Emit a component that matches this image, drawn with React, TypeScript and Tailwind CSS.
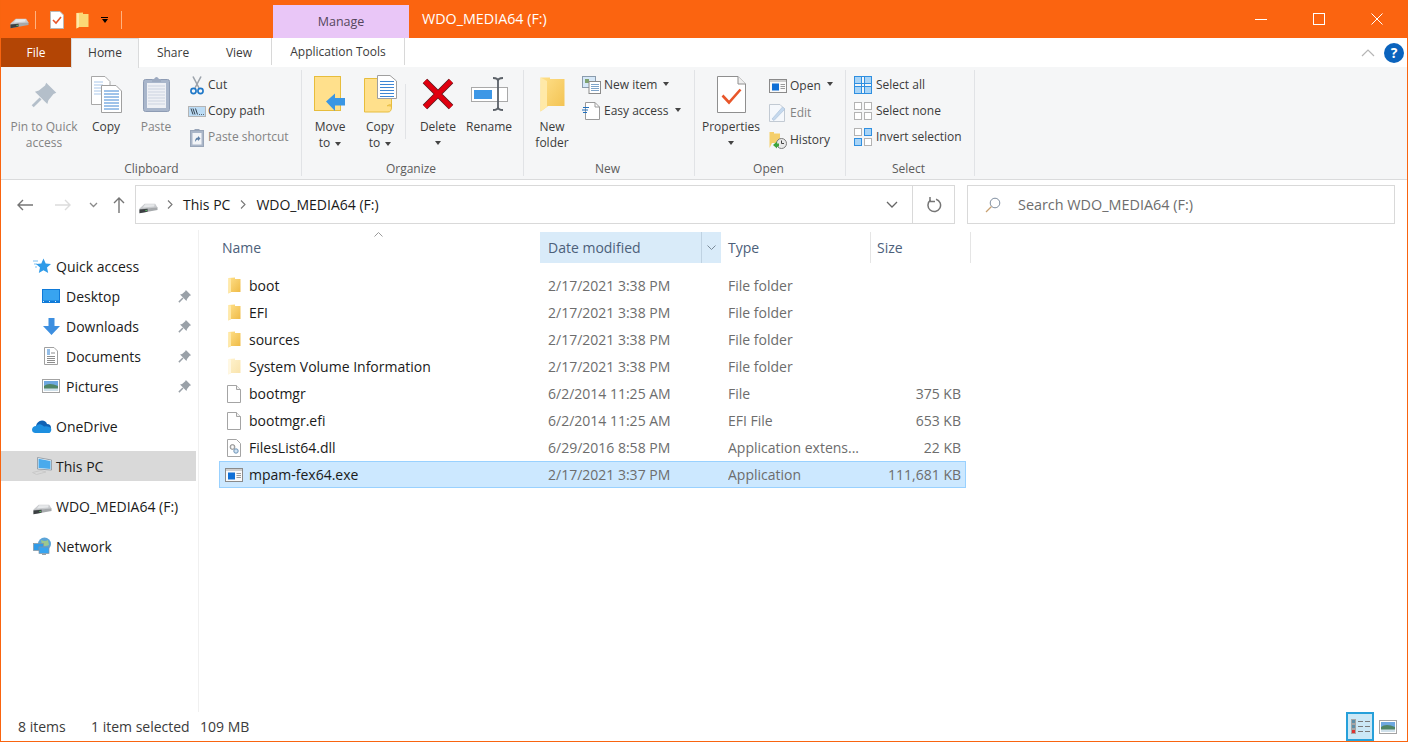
import type { ReactNode } from 'react';

function Drive({ className = '' }: { className?: string }) {
  return (
    <svg viewBox="0 0 20 11" className={`h-[11px] w-[19px] ${className}`}>
      <path d="M0.5 5.5 L6 0.5 H17 L19.5 4.5 V5 L0.5 6.5 Z" fill="#c9cbce" />
      <path d="M6.5 1 H16.5 L16 3.5 L4 4.5 Z" fill="#e6e8ea" />
      <path d="M0.5 6 L19.5 4.5 V7 L0.5 10.5 Z" fill="#a6a9ac" />
      <path d="M0.5 6.5 L9 5.8 V8.8 L0.5 10.5 Z" fill="#3c4043" />
      <circle cx="7.5" cy="7.5" r="0.8" fill="#5fd06a" />
    </svg>
  );
}

function ListFolder({ pale = false }: { pale?: boolean }) {
  const id = pale ? 'fp' : 'fy';
  return (
    <svg viewBox="0 0 13 17" className="h-[17px] w-[13px]">
      <defs>
        <linearGradient id={id} x1="0" y1="0" x2="1" y2="1">
          <stop offset="0" stopColor={pale ? '#fff3cf' : '#ffe08a'} />
          <stop offset="1" stopColor={pale ? '#f9e3ab' : '#eeb943'} />
        </linearGradient>
      </defs>
      <path d="M0.5 1 L7 0.5 V2 H12.5 V15 H3 L0.5 16.5 Z" fill={`url(#${id})`} />
      <path d="M0.5 1 L3 1.5 V15 L0.5 16.5 Z" fill={pale ? '#fff8e3' : '#ffe9a8'} />
    </svg>
  );
}

function BlankFile() {
  return (
    <svg viewBox="0 0 14 18" className="h-[18px] w-[14px]">
      <path d="M0.5 0.5 H9.5 L13.5 4.5 V17.5 H0.5 Z" fill="#fff" stroke="#a4a4a4" />
      <path d="M9.5 0.5 V4.5 H13.5" fill="#f2f2f2" stroke="#a4a4a4" />
    </svg>
  );
}

function DllFile() {
  return (
    <svg viewBox="0 0 14 18" className="h-[18px] w-[14px]">
      <path d="M0.5 0.5 H9.5 L13.5 4.5 V17.5 H0.5 Z" fill="#fff" stroke="#a4a4a4" />
      <circle cx="5.5" cy="8" r="2.4" fill="#e4e4e4" stroke="#8b8b8b" />
      <circle cx="5.5" cy="8" r="0.9" fill="#fff" />
      <circle cx="9" cy="12" r="2.2" fill="#cfe2f3" stroke="#6e93b5" />
    </svg>
  );
}

function WindowIcon({ className = 'h-[14px] w-[18px]' }: { className?: string }) {
  return (
    <svg viewBox="0 0 18 14" className={className}>
      <rect x="0.5" y="0.5" width="17" height="13" fill="#fafafa" stroke="#8a8a8a" />
      <rect x="1" y="1" width="16" height="2" fill="#cfcfcf" />
      <rect x="3" y="4.5" width="7" height="7" fill="#0f6fd6" />
      <path d="M11.5 5.5 H16 M11.5 7.5 H16 M11.5 9.5 H16" stroke="#9a9a9a" />
    </svg>
  );
}

function Pin({ className = '', color = '#a3abb3' }: { className?: string; color?: string }) {
  return (
    <svg viewBox="0 0 24 24" className={className}>
      <path d="M13.5 1.5 L22.5 10.5 L20 11.5 L15.5 17 L14.5 20.5 L3.5 9.5 L7 8.5 L12.5 4 Z" fill={color} />
      <path d="M8.5 15.5 L1.5 22.5" stroke={color} strokeWidth="2.5" />
    </svg>
  );
}

function CopyDocs({ className = 'h-[37px] w-[31px]' }: { className?: string }) {
  const lines = [5, 8, 11, 14, 17, 20, 23];
  return (
    <svg viewBox="0 0 31 37" className={className}>
      <path d="M0.5 0.5 H14 L19 5.5 V28.5 H0.5 Z" fill="#fff" stroke="#a8a8a8" />
      {lines.slice(0, 5).map((y) => (
        <path key={y} d={`M3 ${y + 1} H12`} stroke="#a9c7ea" />
      ))}
      <path d="M10.5 9.5 H25 L30.5 15 V36.5 H10.5 Z" fill="#fff" stroke="#a0a0a0" />
      {lines.map((y) => (
        <path key={y} d={`M13 ${y + 10} H28`} stroke="#3e86d4" />
      ))}
    </svg>
  );
}

function PasteBoard() {
  return (
    <svg viewBox="0 0 27 36" className="h-[36px] w-[27px]">
      <rect x="0.5" y="3.5" width="26" height="32" rx="2" fill="#a9b6cb" stroke="#8e9cb4" />
      <rect x="4" y="7" width="19" height="25" fill="#eef0f5" />
      {[10, 13, 16, 19, 22, 25, 28].map((y) => (
        <path key={y} d={`M5 ${y} H22`} stroke="#ccd3e0" />
      ))}
      <path d="M9 6 V3 H11 Q13.5 -1 16 3 H18 V6 Z" fill="#9daac0" />
    </svg>
  );
}

function Scissors() {
  return (
    <svg viewBox="0 0 14 19" className="h-[19px] w-[14px]">
      <path d="M3 0.5 L9 12 M11 0.5 L5 12" stroke="#9ca3ab" strokeWidth="1.6" />
      <circle cx="3.5" cy="15" r="2.6" fill="none" stroke="#1f78c8" strokeWidth="1.6" />
      <circle cx="10.5" cy="15" r="2.6" fill="none" stroke="#1f78c8" strokeWidth="1.6" />
    </svg>
  );
}

function CopyPathIcon() {
  return (
    <svg viewBox="0 0 18 11" className="h-[11px] w-[18px]">
      <rect x="0.5" y="0.5" width="17" height="10" fill="#bcdcf5" stroke="#b4b4b4" />
      <path d="M3 2.5 L5 8.5 M5 2.5 L7 8.5 M7.5 2.5 L9.5 8.5" stroke="#26323d" strokeWidth="0.9" />
      <path d="M11 8.5 H12 M13 8.5 H14 M15 8.5 H16" stroke="#5a6772" />
    </svg>
  );
}

function PasteShortcutIcon() {
  return (
    <svg viewBox="0 0 14 19" className="h-[19px] w-[14px]">
      <rect x="0.5" y="2.5" width="13" height="16" fill="#aab6c8" stroke="#98a5b8" />
      <rect x="2.5" y="5" width="9" height="11.5" fill="#f2f4f7" />
      <path d="M4.5 2.5 V1 H9.5 V2.5 Z" fill="#98a5b8" />
      <path d="M5 14 Q5 9.5 8 9.5 V8 L10.5 10.5 L8 13 V11.5 Q6 11.5 5 14 Z" fill="#5d7fa5" />
    </svg>
  );
}

function MoveToIcon() {
  return (
    <svg viewBox="0 0 32 36" className="h-[36px] w-[32px]">
      <rect x="0.5" y="0.5" width="26" height="34" fill="#ffe08c" stroke="#e7bd3c" />
      <path d="M12 25.5 L21 17.5 V22 H31 V29.5 H21 V35 Z" fill="#3a96e4" />
    </svg>
  );
}

function CopyToIcon() {
  return (
    <svg viewBox="0 0 33 38" className="h-[38px] w-[33px]">
      <path d="M0.5 3.5 H27.5 V32 Q27.5 37 24 37 H0.5 Z" fill="#ffe08c" stroke="#e7bd3c" />
      <path d="M23 31 Q27.5 28 27.5 32" fill="#f4cb63" stroke="#e7bd3c" />
      <path d="M13.5 0.5 H26 L32.5 6 V23.5 H13.5 Z" fill="#fff" stroke="#9f9f9f" />
      {[6, 9, 12, 15, 18, 21].map((y) => (
        <path key={y} d={`M16 ${y + 0.5} H30`} stroke="#3e86d4" />
      ))}
    </svg>
  );
}

function DeleteIcon() {
  return (
    <svg viewBox="0 0 32 32" className="h-[32px] w-[32px]">
      <path d="M3 3 L29 29 M29 3 L3 29" stroke="#5d1a20" strokeWidth="6.4" />
      <path d="M3 3 L29 29 M29 3 L3 29" stroke="#e0000f" strokeWidth="4.8" />
    </svg>
  );
}

function RenameIcon() {
  return (
    <svg viewBox="0 0 37 34" className="h-[34px] w-[37px]">
      <rect x="0.5" y="10.5" width="36" height="14" fill="#fff" stroke="#a9a9a9" />
      <rect x="3" y="13" width="18" height="9" fill="#3d97e6" />
      <path d="M22 1 Q27 1 27 4 V30 Q27 33 32 33 M32 1 Q27 1 27 4 M27 30 Q27 33 22 33" fill="none" stroke="#5b6168" strokeWidth="1.8" />
    </svg>
  );
}

function BigFolder() {
  return (
    <svg viewBox="0 0 25 36" className="h-[36px] w-[25px]">
      <defs>
        <linearGradient id="bf" x1="0" y1="0" x2="1" y2="1">
          <stop offset="0" stopColor="#ffe08a" />
          <stop offset="1" stopColor="#f2c14f" />
        </linearGradient>
      </defs>
      <path d="M0.5 1.5 L10 1.5 V3 H24.5 V30 H8 L0.5 35.5 Z" fill="url(#bf)" />
      <path d="M0.5 1.5 L7 5 V31 L0.5 35.5 Z" fill="#ffe9a8" />
    </svg>
  );
}

function NewItemIcon() {
  return (
    <svg viewBox="0 0 19 18" className="h-[18px] w-[19px]">
      <rect x="0.5" y="0.5" width="13" height="11" fill="#d6e8f8" stroke="#8b9cad" />
      <rect x="3" y="3" width="4" height="4" fill="#7fa36f" />
      <rect x="7" y="5.5" width="11.5" height="12" fill="#fff" stroke="#8b8b8b" />
      {[8, 10, 12, 14].map((y) => (
        <path key={y} d={`M9 ${y + 0.5} H17`} stroke="#7ea4c9" />
      ))}
    </svg>
  );
}

function EasyAccessIcon() {
  return (
    <svg viewBox="0 0 18 18" className="h-[18px] w-[18px]">
      <path d="M3.5 0.5 H13 L17.5 5 V17.5 H3.5 Z" fill="#fff" stroke="#9a9a9a" />
      <path d="M13 0.5 V5 H17.5" fill="none" stroke="#9a9a9a" />
      <path d="M1 5.5 H7 M0 8 H6 M1 10.5 H5" stroke="#1f6fbd" />
    </svg>
  );
}

function PropertiesIcon() {
  return (
    <svg viewBox="0 0 29 37" className="h-[37px] w-[29px]">
      <path d="M0.5 0.5 H21 L28.5 8 V36.5 H0.5 Z" fill="#fff" stroke="#8f8f8f" />
      <path d="M21 0.5 V8 H28.5" fill="#efefef" stroke="#8f8f8f" />
      <path d="M5.5 19.5 L12 26.5 L23.5 13.5" fill="none" stroke="#e8562a" strokeWidth="2.6" />
    </svg>
  );
}

function EditIcon() {
  return (
    <svg viewBox="0 0 17 18" className="h-[18px] w-[17px]">
      <path d="M0.5 0.5 H11 L15.5 5 V17.5 H0.5 Z" fill="#f5f8fc" stroke="#c2cad3" />
      <path d="M3 15 L13.5 3 L16 5 L5 16.5 Z" fill="#c5d9ee" stroke="#a7bdd6" strokeWidth="0.6" />
    </svg>
  );
}

function HistoryIcon() {
  return (
    <svg viewBox="0 0 18 18" className="h-[18px] w-[18px]">
      <path d="M0.5 1 H5 V2.5 H11 V12 H3 L0.5 17 Z" fill="#f5cf6b" />
      <circle cx="12.5" cy="12.5" r="5" fill="#e9e9e9" stroke="#7b7b7b" />
      <path d="M12.5 9.5 V12.5 H15" fill="none" stroke="#444" />
      <path d="M4 14 L8 10.5 V12.5 H10 V15.5 H8 V17.5 Z" fill="#3ca33c" />
    </svg>
  );
}

function GridIcon({ on }: { on: boolean[] }) {
  const spots = [
    [0, 0],
    [10, 0],
    [0, 10],
    [10, 10],
  ];
  return (
    <svg viewBox="0 0 18 18" className="h-[18px] w-[18px]">
      {spots.map(([x, y], i) => (
        <rect
          key={i}
          x={x + 0.5}
          y={y + 0.5}
          width="7"
          height="7"
          fill={on[i] ? '#a8d4f7' : '#fff'}
          stroke={on[i] ? '#2f8fe0' : '#b3b3b3'}
        />
      ))}
      {on.every(Boolean) && <path d="M8 0.5 H10 M8 7.5 H10 M8 10.5 H10 M8 17.5 H10 M0.5 8 V10 M7.5 8 V10 M10.5 8 V10 M17.5 8 V10" stroke="#2f8fe0" />}
    </svg>
  );
}

function Caret({ className = 'border-t-[#444]' }: { className?: string }) {
  return <span className={`inline-block h-0 w-0 border-x-[3.5px] border-t-[4px] border-x-transparent align-middle ${className}`} />;
}

function StarIcon() {
  return (
    <svg viewBox="0 0 18 16" className="h-[16px] w-[18px]">
      <path d="M0 3 H5 M1 6 H4 M2 9 H4" stroke="#7cc0f2" />
      <path d="M10.5 0.5 L12.7 5.5 L18 6 L14 9.5 L15.2 15 L10.5 12.2 L5.8 15 L7 9.5 L3 6 L8.3 5.5 Z" fill="#2f9be8" />
    </svg>
  );
}

function DesktopIcon() {
  return (
    <svg viewBox="0 0 18 14" className="h-[14px] w-[18px]">
      <rect x="0" y="0" width="18" height="14" fill="#0f7ad8" />
      <rect x="1" y="1" width="16" height="10.5" fill="#38a4f0" />
      <path d="M1 12.5 H17" stroke="#d8eefc" strokeDasharray="1 5" />
    </svg>
  );
}

function DownloadsIcon() {
  return (
    <svg viewBox="0 0 17 17" className="h-[17px] w-[17px]">
      <path d="M5.5 0 H11.5 V8 H17 L8.5 17 L0 8 H5.5 Z" fill="#3d8fe0" />
    </svg>
  );
}

function DocumentsIcon() {
  return (
    <svg viewBox="0 0 14 18" className="h-[18px] w-[14px]">
      <path d="M0.5 0.5 H10 L13.5 4 V17.5 H0.5 Z" fill="#fff" stroke="#a0a0a0" />
      <path d="M3 3 H6 M3 5 H6 M3 7 H6" stroke="#2d7fd0" />
      <path d="M7 6 H11 M3 9.5 H11 M3 11.5 H11 M3 13.5 H11 M3 15.5 H11" stroke="#8d8d8d" />
    </svg>
  );
}

function PicturesIcon({ className = 'h-[14px] w-[18px]' }: { className?: string }) {
  return (
    <svg viewBox="0 0 18 14" className={className}>
      <rect x="0.5" y="0.5" width="17" height="13" fill="#fff" stroke="#a3a3a3" />
      <rect x="2" y="2" width="14" height="5" fill="#6ea8e0" />
      <path d="M2 7 Q7 3 16 7 V12 H2 Z" fill="#4f8566" />
      <rect x="2" y="9.5" width="14" height="2.5" fill="#cfe0ea" />
    </svg>
  );
}

function OneDriveIcon() {
  return (
    <svg viewBox="0 0 20 13" className="h-[13px] w-[20px]">
      <path d="M4 6 Q5 1 10 0.5 Q14 0.5 15 4 Q19 4 19 8 L10 9 Z" fill="#0f62b5" />
      <path d="M3 13 Q0 12.5 0 9.5 Q0.5 6 4 6 Q6 3.5 9 4.5 Q11 5.5 12 6.5 Q16 5.5 19 8 Q20 11 17.5 13 Z" fill="#1d8fe0" />
    </svg>
  );
}

function ThisPcIcon() {
  return (
    <svg viewBox="0 0 20 18" className="h-[18px] w-[20px]">
      <path d="M5.5 0.5 L19.5 3 V13 L5.5 12 Z" fill="#f2f6f9" stroke="#85919b" strokeWidth="0.8" />
      <path d="M6.5 1.8 L18.5 4 V12 L6.5 11 Z" fill="#49aaec" />
      <path d="M0.5 15.5 L9 13.5 L14 15 L4.5 17.5 Z" fill="none" stroke="#c9c9c9" />
    </svg>
  );
}

function NetworkIcon() {
  return (
    <svg viewBox="0 0 19 18" className="h-[18px] w-[19px]">
      <circle cx="11.5" cy="7" r="6.5" fill="#5ba4d8" />
      <path d="M8 3 Q12 5 15 3 L16 8 Q12 10 9 8 Z" fill="#9cc78e" />
      <rect x="0.5" y="6.5" width="10" height="7" fill="#2f9be8" stroke="#8a949c" strokeWidth="0.7" />
      <rect x="6" y="10" width="10" height="6.5" fill="#38a4f0" stroke="#8a949c" strokeWidth="0.7" />
      <path d="M9 17.5 H13" stroke="#9aa0a5" />
    </svg>
  );
}

function LargeButton({ w, icon, label, gray = false, caret = false }: { w: string; icon: ReactNode; label: ReactNode; gray?: boolean; caret?: boolean }) {
  return (
    <div className={`flex shrink-0 flex-col items-center ${w}`}>
      <div className="flex h-[47px] items-center justify-center pb-[3px]">{icon}</div>
      <div className={`text-center leading-[16px] whitespace-nowrap ${gray ? 'text-[#838383]' : 'text-[#3b3b3b]'}`}>
        {label}
        {caret && (
          <div className="flex h-[16px] items-center justify-center">
            <Caret />
          </div>
        )}
      </div>
    </div>
  );
}

function SmallButton({ icon, label, w, gray = false, caret = false, h = 'h-[26px]' }: { icon: ReactNode; label: string; w: string; gray?: boolean; caret?: boolean; h?: string }) {
  return (
    <div className={`flex items-center ${h} ${gray ? 'text-[#838383]' : 'text-[#3b3b3b]'}`}>
      <div className={`flex shrink-0 items-center justify-center ${w}`}>{icon}</div>
      <span>{label}</span>
      {caret && <Caret className="ml-[6px] mb-[3px] border-t-[#444]" />}
    </div>
  );
}

function Group({ w, title, titlePad = 'pr-[4px]', children }: { w: string; title: string; titlePad?: string; children: ReactNode }) {
  return (
    <div className={`relative flex h-full shrink-0 flex-col ${w}`}>
      <div className="flex h-[94px] pt-[5px]">{children}</div>
      <div className={`text-center leading-[16px] text-[#5c5c5c] ${titlePad}`}>{title}</div>
      <div className="absolute right-0 top-[3px] bottom-[3px] w-px bg-[#e1e3e6]" />
    </div>
  );
}

function Ribbon() {
  return (
    <div className="flex h-[113px] shrink-0 border-b border-[#dadbdc] bg-[#f5f6f7] text-[12px]">
      <Group w="w-[301px]" titlePad="pr-0" title="Clipboard">
        <div className="w-[7px] shrink-0" />
        <LargeButton w="w-[72px]" gray icon={<Pin className="h-[27px] w-[27px]" color="#b4bfca" />} label={<>Pin to Quick<br />access</>} />
        <LargeButton w="w-[52px]" icon={<CopyDocs />} label="Copy" />
        <LargeButton w="w-[48px]" gray icon={<PasteBoard />} label="Paste" />
        <div className="ml-[5px]">
          <SmallButton w="w-[23px]" icon={<Scissors />} label="Cut" />
          <SmallButton w="w-[23px]" icon={<CopyPathIcon />} label="Copy path" />
          <SmallButton w="w-[23px]" gray icon={<PasteShortcutIcon />} label="Paste shortcut" />
        </div>
      </Group>
      <Group w="w-[222px]" title="Organize">
        <div className="w-[3px] shrink-0" />
        <LargeButton w="w-[50px]" icon={<MoveToIcon />} label={<>Move<br />to <Caret className="ml-[2px] border-t-[#444]" /></>} />
        <LargeButton w="w-[50px]" icon={<CopyToIcon />} label={<>Copy<br />to <Caret className="ml-[2px] border-t-[#444]" /></>} />
        <div className="mt-[12px] h-[55px] w-px bg-[#e1e3e6]" />
        <LargeButton w="w-[64px]" icon={<DeleteIcon />} label="Delete" caret />
        <LargeButton w="w-[38px]" icon={<RenameIcon />} label="Rename" />
      </Group>
      <Group w="w-[171px]" title="New">
        <div className="w-[6px] shrink-0" />
        <LargeButton w="w-[44px]" icon={<BigFolder />} label={<>New<br />folder</>} />
        <div className="ml-[7px]">
          <SmallButton w="w-[20px] mr-[3px]" icon={<NewItemIcon />} label="New item" caret />
          <SmallButton w="w-[20px] mr-[3px]" icon={<EasyAccessIcon />} label="Easy access" caret />
        </div>
      </Group>
      <Group w="w-[151px]" title="Open">
        <div className="w-[2px] shrink-0" />
        <LargeButton w="w-[68px]" icon={<PropertiesIcon />} label="Properties" caret />
        <div className="ml-[3px]">
          <SmallButton h="h-[27px]" w="w-[19px] mr-[3px]" icon={<WindowIcon />} label="Open" caret />
          <SmallButton h="h-[27px]" w="w-[19px] mr-[3px]" gray icon={<EditIcon />} label="Edit" />
          <SmallButton h="h-[27px]" w="w-[19px] mr-[3px]" icon={<HistoryIcon />} label="History" />
        </div>
      </Group>
      <Group w="w-[129px]" title="Select">
        <div className="w-[8px] shrink-0" />
        <div>
          <SmallButton w="w-[18px] mr-[4px]" icon={<GridIcon on={[true, true, true, true]} />} label="Select all" />
          <SmallButton w="w-[18px] mr-[4px]" icon={<GridIcon on={[false, false, false, false]} />} label="Select none" />
          <SmallButton w="w-[18px] mr-[4px]" icon={<GridIcon on={[false, true, true, false]} />} label="Invert selection" />
        </div>
      </Group>
    </div>
  );
}

function NavRow({ icon, label, pinned = false, selected = false, deep = false, gap = false }: { icon: ReactNode; label: string; pinned?: boolean; selected?: boolean; deep?: boolean; gap?: boolean }) {
  return (
    <div className={`flex h-[30px] w-[195px] items-center ${gap ? 'mt-[10px]' : ''} ${selected ? 'bg-[#d9d9d9]' : ''}`}>
      <div className={`flex w-[24px] shrink-0 items-center justify-center ${deep ? 'ml-[38px] mr-[3px]' : 'ml-[29px]'}`}>{icon}</div>
      <span className={deep ? '' : 'ml-[2px]'}>{label}</span>
      {pinned && <Pin className="ml-auto mr-[4px] h-[14px] w-[14px]" color="#9aa1a8" />}
    </div>
  );
}

const files = [
  { name: 'boot', date: '2/17/2021 3:38 PM', type: 'File folder', size: '', icon: <ListFolder /> },
  { name: 'EFI', date: '2/17/2021 3:38 PM', type: 'File folder', size: '', icon: <ListFolder /> },
  { name: 'sources', date: '2/17/2021 3:38 PM', type: 'File folder', size: '', icon: <ListFolder /> },
  { name: 'System Volume Information', date: '2/17/2021 3:38 PM', type: 'File folder', size: '', icon: <ListFolder pale /> },
  { name: 'bootmgr', date: '6/2/2014 11:25 AM', type: 'File', size: '375 KB', icon: <BlankFile /> },
  { name: 'bootmgr.efi', date: '6/2/2014 11:25 AM', type: 'EFI File', size: '653 KB', icon: <BlankFile /> },
  { name: 'FilesList64.dll', date: '6/29/2016 8:58 PM', type: 'Application extens...', size: '22 KB', icon: <DllFile /> },
  { name: 'mpam-fex64.exe', date: '2/17/2021 3:37 PM', type: 'Application', size: '111,681 KB', icon: <WindowIcon />, selected: true },
];

export default function App() {
  return (
    <div className="box-border flex h-[742px] w-[1408px] flex-col overflow-hidden border-x border-b border-[#f9640f] bg-white font-['Open_Sans','Noto_Sans',sans-serif] text-[14px] text-[#1a1a1a]">
      {/* Title bar */}
      <div className="-mx-px flex h-[38px] shrink-0 bg-[#fb6410]">
        <div className="flex h-full w-[273px] items-center pl-[10px] pt-[2px]">
          <Drive className="mt-[6px]" />
          <div className="ml-[6px] h-[18px] w-px bg-[#ffb27f]" />
          <svg viewBox="0 0 14 18" className="ml-[14px] h-[18px] w-[14px]">
            <path d="M0.5 0.5 H10 L13.5 4 V17.5 H0.5 Z" fill="#fff" stroke="#b8b8b8" />
            <path d="M3 9 L6 12 L11 6" fill="none" stroke="#e8562a" strokeWidth="1.6" />
          </svg>
          <svg viewBox="0 0 13 17" className="ml-[12px] h-[17px] w-[13px]">
            <path d="M0.5 1 L7 0.5 V2 H12.5 V15 H3 L0.5 16.5 Z" fill="#fbd976" />
            <path d="M0.5 1 L3 1.5 V15 L0.5 16.5 Z" fill="#ffe9a8" />
          </svg>
          <div className="ml-[11px] flex w-[9px] flex-col items-center">
            <div className="mb-[1px] h-px w-[7px] bg-black" />
            <Caret className="border-t-black" />
          </div>
          <div className="ml-[12px] h-[18px] w-px bg-[#ffb27f]" />
        </div>
        <div className="mt-[5px] flex h-[33px] w-[136px] items-center justify-center bg-[#e9c6f7] pt-[2px] text-[12.5px] text-[#55465c]">Manage</div>
        <div className="ml-[13px] flex items-center pb-[1px] text-[14.3px] text-white">WDO_MEDIA64 (F:)</div>
        <div className="ml-auto mr-[2px] flex">
          <div className="flex h-[38px] w-[58px] items-center justify-center">
            <div className="h-px w-[12px] bg-white" />
          </div>
          <div className="flex h-[38px] w-[58px] items-center justify-center">
            <div className="h-[12px] w-[12px] border border-white" />
          </div>
          <div className="flex h-[38px] w-[58px] items-center justify-center">
            <svg viewBox="0 0 12 12" className="h-[12px] w-[12px]">
              <path d="M0.5 0.5 L11.5 11.5 M11.5 0.5 L0.5 11.5" stroke="#fff" />
            </svg>
          </div>
        </div>
      </div>

      {/* Tabs */}
      <div className="flex h-[29px] shrink-0 items-stretch bg-white text-[12px] text-[#3b3b3b]">
        <div className="flex w-[70px] items-center justify-center bg-[#b34505] text-white">File</div>
        <div className="z-10 -mb-px flex w-[68px] items-center justify-center border-x border-t border-[#dadbdc] bg-[#f5f6f7] pb-[1px]">Home</div>
        <div className="flex w-[68px] items-center justify-center">Share</div>
        <div className="flex w-[64px] items-center justify-center">View</div>
        <div className="flex h-[27px] w-[134px] items-center justify-center border-x border-[#d8d8d8]">Application Tools</div>
        <div className="ml-auto mr-[3px] flex items-center gap-[9px]">
          <svg viewBox="0 0 14 8" className="h-[8px] w-[14px]">
            <path d="M1 7 L7 1 L13 7" fill="none" stroke="#b5b5b5" strokeWidth="1.2" />
          </svg>
          <div className="flex h-[20px] w-[20px] items-center justify-center rounded-full bg-[#0b63bd] text-[14px] font-bold leading-none text-white">?</div>
        </div>
      </div>

      <Ribbon />

      {/* Address bar */}
      <div className="flex h-[50px] shrink-0 items-start pt-[5px]">
        <div className="flex h-[39px] w-[134px] shrink-0 items-center text-[#7d7d7d]">
          <svg viewBox="0 0 16 12" className="ml-[16px] h-[12px] w-[16px]">
            <path d="M6 1 L1 6 L6 11 M1 6 H16" fill="none" stroke="#757575" strokeWidth="1.4" />
          </svg>
          <svg viewBox="0 0 16 12" className="ml-[22px] h-[12px] w-[16px]">
            <path d="M10 1 L15 6 L10 11 M15 6 H0" fill="none" stroke="#dcdcdc" strokeWidth="1.4" />
          </svg>
          <svg viewBox="0 0 9 6" className="ml-[18px] h-[6px] w-[9px]">
            <path d="M1 1 L4.5 4.5 L8 1" fill="none" stroke="#8a8a8a" strokeWidth="1.3" />
          </svg>
          <svg viewBox="0 0 12 16" className="ml-[15px] h-[16px] w-[12px]">
            <path d="M1 6 L6 1 L11 6 M6 1 V16" fill="none" stroke="#757575" strokeWidth="1.4" />
          </svg>
        </div>
        <div className="flex h-[39px] w-[820px] shrink-0 items-center border border-[#d9d9d9]">
          <Drive className="ml-[3px] mt-[8px]" />
          <svg viewBox="0 0 6 9" className="ml-[9px] h-[9px] w-[6px]">
            <path d="M1 0.5 L5 4.5 L1 8.5" fill="none" stroke="#777" strokeWidth="1.1" />
          </svg>
          <span className="ml-[10px]">This PC</span>
          <svg viewBox="0 0 6 9" className="ml-[10px] h-[9px] w-[6px]">
            <path d="M1 0.5 L5 4.5 L1 8.5" fill="none" stroke="#777" strokeWidth="1.1" />
          </svg>
          <span className="ml-[10px]">WDO_MEDIA64 (F:)</span>
          <svg viewBox="0 0 12 7" className="ml-auto mr-[14px] h-[7px] w-[12px]">
            <path d="M1 1 L6 6 L11 1" fill="none" stroke="#666" strokeWidth="1.3" />
          </svg>
          <div className="flex h-full w-[42px] items-center justify-center border-l border-[#d9d9d9]">
            <svg viewBox="0 0 16 16" className="h-[16px] w-[16px]">
              <path d="M10 2.2 A6.3 6.3 0 1 1 4.5 3.2" fill="none" stroke="#757575" strokeWidth="1.5" />
              <path d="M4 0 V5 H9" fill="none" stroke="#757575" strokeWidth="1.5" transform="translate(0 -0.5)" />
            </svg>
          </div>
        </div>
        <div className="ml-[12px] flex h-[39px] w-[428px] shrink-0 items-center border border-[#d9d9d9] text-[14.4px] text-[#6d6d6d]">
          <svg viewBox="0 0 16 16" className="ml-[17px] h-[16px] w-[16px]">
            <circle cx="10" cy="6" r="4.8" fill="none" stroke="#7f8ea0" />
            <path d="M6.5 9.5 L1 15" stroke="#c8a070" strokeWidth="1.2" />
          </svg>
          <span className="ml-[17px]">Search WDO_MEDIA64 (F:)</span>
        </div>
      </div>

      {/* Main area */}
      <div className="flex min-h-0 flex-1">
        <div className="w-[198px] shrink-0 border-r border-[#f0f0f0] pt-[21px]">
          <NavRow icon={<StarIcon />} label="Quick access" />
          <NavRow deep icon={<DesktopIcon />} label="Desktop" pinned />
          <NavRow deep icon={<DownloadsIcon />} label="Downloads" pinned />
          <NavRow deep icon={<DocumentsIcon />} label="Documents" pinned />
          <NavRow deep icon={<PicturesIcon />} label="Pictures" pinned />
          <NavRow gap icon={<OneDriveIcon />} label="OneDrive" />
          <NavRow gap selected icon={<ThisPcIcon />} label="This PC" />
          <NavRow gap icon={<Drive className="mt-[6px]" />} label="WDO_MEDIA64 (F:)" />
          <NavRow gap icon={<NetworkIcon />} label="Network" />
        </div>

        <div className="min-w-0 flex-1 pt-[2px]">
          <div className="relative flex h-[31px] text-[#4c607a]">
            <svg viewBox="0 0 9 5" className="absolute left-[175px] top-0 h-[5px] w-[9px]">
              <path d="M0.5 4.5 L4.5 0.5 L8.5 4.5" fill="none" stroke="#9a9a9a" />
            </svg>
            <div className="flex w-[341px] items-center pl-[23px]">Name</div>
            <div className="flex w-[181px] items-center bg-[#d9ebf9]">
              <span className="flex-1 pl-[8px]">Date modified</span>
              <div className="flex h-full w-[20px] items-center justify-center border-l border-[#bfd2e2]">
                <svg viewBox="0 0 9 5" className="h-[5px] w-[9px]">
                  <path d="M0.5 0.5 L4.5 4.5 L8.5 0.5" fill="none" stroke="#7a8a99" />
                </svg>
              </div>
            </div>
            <div className="flex w-[150px] items-center border-r border-[#e5e5e5] pl-[7px]">Type</div>
            <div className="flex w-[100px] items-center border-r border-[#e5e5e5] pl-[6px]">Size</div>
          </div>
          <div className="ml-[20px] mt-[9px] w-[747px]">
            {files.map((f) => (
              <div key={f.name} className={`box-border flex h-[27px] items-center border ${f.selected ? 'border-[#99d1ff] bg-[#cce8ff]' : 'border-transparent'}`}>
                <div className="flex w-[29px] shrink-0 items-center justify-center pl-[3px] pr-[4px]">{f.icon}</div>
                <div className="w-[299px] shrink-0 text-[#1a1a1a]">{f.name}</div>
                <div className="w-[180px] shrink-0 text-[#6d6d6d]">{f.date}</div>
                <div className="w-[143px] shrink-0 truncate text-[#6d6d6d]">{f.type}</div>
                <div className="flex-1 pr-[4px] text-right text-[#6d6d6d]">{f.size}</div>
              </div>
            ))}
          </div>
        </div>
      </div>

      {/* Status bar */}
      <div className="flex h-[29px] shrink-0 items-center text-[#3b3b3b]">
        <span className="ml-[17px] w-[73px]">8 items</span>
        <span className="w-[109px]">1 item selected</span>
        <span>109 MB</span>
        <div className="ml-auto mr-[5px] flex items-center">
          <div className="flex h-[29px] w-[28px] items-center justify-center border-2 border-[#26a0da] bg-[#cbe8f6]">
            <svg viewBox="0 0 19 15" className="h-[15px] w-[19px]">
              {[0.5, 5.5, 10.5].map((y, i) => (
                <g key={y}>
                  <rect x="0.5" y={y} width="4" height="4" fill={i === 2 ? '#d33' : '#5d8fa8'} stroke="#a5a5a5" />
                  <path d={`M7 ${y + 2} H12 M14 ${y + 2} H19`} stroke="#7a7a7a" />
                </g>
              ))}
            </svg>
          </div>
          <div className="flex h-[29px] w-[28px] items-center justify-center">
            <PicturesIcon className="h-[14px] w-[18px]" />
          </div>
        </div>
      </div>
    </div>
  );
}
